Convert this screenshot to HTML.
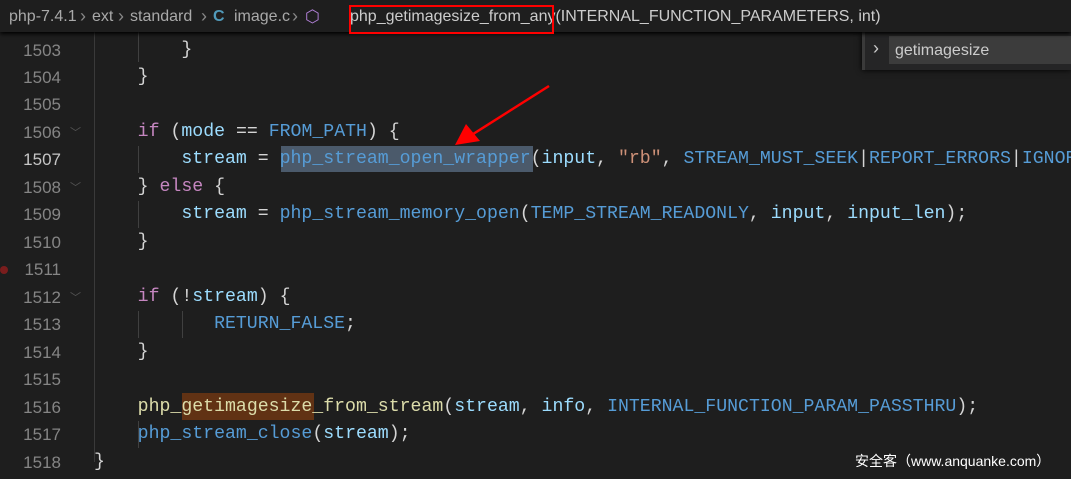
<!DOCTYPE html>
<html><head><meta charset="utf-8"><style>
*{margin:0;padding:0;box-sizing:border-box}
body{width:1071px;height:479px;background:#1e1e1e;overflow:hidden;position:relative;font-family:"Liberation Mono",monospace}
.bc{position:absolute;left:0;top:0;width:1071px;height:32px;background:#1e1e1e;box-shadow:0 2px 4px #000;font-family:"Liberation Sans",sans-serif;font-size:16px;color:#a9a9a9;line-height:33px;white-space:nowrap;z-index:3;overflow:hidden}
.bc span{position:absolute;top:0}
.sep{color:#888;font-size:18px}
.ln{position:absolute;left:0;width:61px;text-align:right;color:#858585;font-size:17px;height:27.47px;line-height:27.47px;font-family:"Liberation Sans",sans-serif}
.cd{position:absolute;left:94px;font-size:18.2px;height:27.47px;line-height:27.47px;color:#d4d4d4;white-space:pre}
.k{color:#c586c0}.v{color:#9cdcfe}.f{color:#dcdcaa}.c{color:#569cd6}.s{color:#ce9178}
.g{position:absolute;width:1px;background:#404040}
.fold{position:absolute;left:70px;color:#555;font-size:11px;font-family:"Liberation Sans",sans-serif}
#ed{position:absolute;left:0;top:2px;width:1071px;height:477px;overflow:hidden}
</style></head><body>
<div class="bc">
<span style="left:9px">php-7.4.1</span><span class="sep" style="left:80px">›</span>
<span style="left:92px">ext</span><span class="sep" style="left:118px">›</span>
<span style="left:130px">standard</span><span class="sep" style="left:201px">›</span>
<span style="left:213px;color:#519aba;font-weight:bold">C</span>
<span style="left:234px">image.c</span><span class="sep" style="left:292px">›</span>
<span style="left:305px;color:#b180d7;font-size:17px">⬡</span>
<span style="left:350px;color:#ccc">php_getimagesize_from_any(INTERNAL_FUNCTION_PARAMETERS, int)</span>
</div>
<div style="position:absolute;left:349px;top:5px;width:205px;height:29px;border:2px solid #f00;z-index:4"></div>

<div id="ed">
<div class="g" style="left:94px;top:30px;height:430px;background:#3a3a3a"></div>
<div class="g" style="left:138px;top:30px;height:30px"></div>
<div class="g" style="left:138px;top:144px;height:27px"></div>
<div class="g" style="left:138px;top:199px;height:27px"></div>
<div class="g" style="left:138px;top:309px;height:27px"></div>
<div class="g" style="left:182px;top:309px;height:27px"></div>
<div class="g" style="left:138px;top:419px;height:27px"></div>

<div style="position:absolute;left:281px;top:144px;width:252px;height:26px;background:#4b5a6b"></div>
<div style="position:absolute;left:182px;top:391px;width:132px;height:27px;background:#613214"></div>

<div class="ln" style="top:34.5px">1503</div><div class="cd" style="top:34.5px">        }</div>
<div class="ln" style="top:62px">1504</div><div class="cd" style="top:62px">    }</div>
<div class="ln" style="top:89.4px">1505</div>
<div class="ln" style="top:116.9px">1506</div><div class="fold" style="top:122px">﹀</div><div class="cd" style="top:116.9px">    <span class="k">if</span> (<span class="v">mode</span> == <span class="c">FROM_PATH</span>) {</div>
<div class="ln" style="top:144.4px;color:#c6c6c6">1507</div><div class="cd" style="top:144.4px">        <span class="v">stream</span> = <span class="c">php_stream_open_wrapper</span>(<span class="v">input</span>, <span class="s">"rb"</span>, <span class="c">STREAM_MUST_SEEK</span>|<span class="c">REPORT_ERRORS</span>|<span class="c">IGNORE</span></div>
<div class="ln" style="top:171.8px">1508</div><div class="fold" style="top:177px">﹀</div><div class="cd" style="top:171.8px">    } <span class="k">else</span> {</div>
<div class="ln" style="top:199.3px">1509</div><div class="cd" style="top:199.3px">        <span class="v">stream</span> = <span class="c">php_stream_memory_open</span>(<span class="c">TEMP_STREAM_READONLY</span>, <span class="v">input</span>, <span class="v">input_len</span>);</div>
<div class="ln" style="top:226.8px">1510</div><div class="cd" style="top:226.8px">    }</div>
<div class="ln" style="top:254.2px">1511</div><div style="position:absolute;left:0;top:264px;width:8px;height:8px;border-radius:50%;background:#7a1d1d"></div>
<div class="ln" style="top:281.7px">1512</div><div class="fold" style="top:287px">﹀</div><div class="cd" style="top:281.7px">    <span class="k">if</span> (!<span class="v">stream</span>) {</div>
<div class="ln" style="top:309.2px">1513</div><div class="cd" style="top:309.2px">           <span class="c">RETURN_FALSE</span>;</div>
<div class="ln" style="top:336.6px">1514</div><div class="cd" style="top:336.6px">    }</div>
<div class="ln" style="top:364.1px">1515</div>
<div class="ln" style="top:391.6px">1516</div><div class="cd" style="top:391.6px">    <span class="f">php_getimagesize_from_stream</span>(<span class="v">stream</span>, <span class="v">info</span>, <span class="c">INTERNAL_FUNCTION_PARAM_PASSTHRU</span>);</div>
<div class="ln" style="top:419px">1517</div><div class="cd" style="top:419px">    <span class="c">php_stream_close</span>(<span class="v">stream</span>);</div>
<div class="ln" style="top:446.5px">1518</div><div class="cd" style="top:446.5px">}</div>
</div>

<div style="position:absolute;left:862px;top:31px;width:209px;height:39px;background:#252526;box-shadow:0 0 6px #000;border-left:3px solid #3a3a3a;z-index:2">
<span style="position:absolute;left:8px;top:7px;color:#ccc;font-family:'Liberation Sans',sans-serif;font-size:18px">›</span>
<div style="position:absolute;left:24px;top:5px;width:190px;height:28px;background:#3c3c3c;color:#ccc;font-family:'Liberation Sans',sans-serif;font-size:16px;line-height:30px;padding-left:6px">getimagesize</div></div>

<svg style="position:absolute;left:0;top:0;z-index:5" width="1071" height="479"><line x1="549" y1="86" x2="470" y2="136" stroke="#f00" stroke-width="2.5"/><polygon points="455,145 466,124 480,141" fill="#f00"/></svg>

<div style="position:absolute;left:855px;top:451px;color:#fff;font-size:14px;font-family:'Liberation Sans','Noto Sans CJK SC',sans-serif">安全客（www.anquanke.com）</div>
</body></html>
